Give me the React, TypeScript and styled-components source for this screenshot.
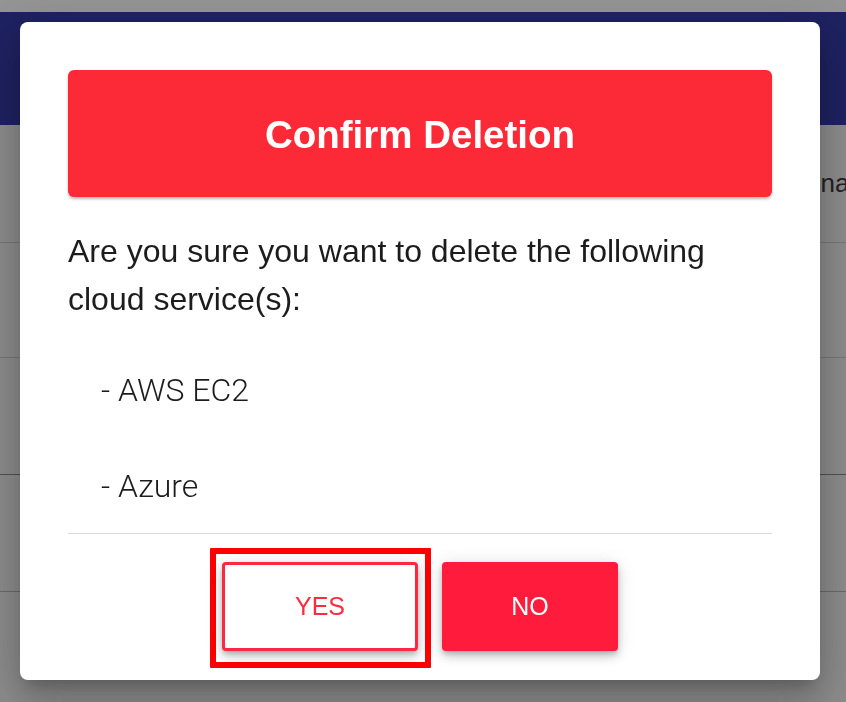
import React from "react";
import styled, { createGlobalStyle } from "styled-components";

const Global = createGlobalStyle`
  html, body { margin: 0; padding: 0; }
  body {
    width: 846px;
    height: 702px;
    overflow: hidden;
    background: #ffffff;
    font-family: "Liberation Sans", Arial, sans-serif;
  }
`;

const Page = styled.div`
  width: 846px;
  height: 702px;
  display: flex;
  flex-direction: column;
  background: #f0f0f0;
  overflow: hidden;
`;

const TopStrip = styled.div`
  height: 12px;
  background: #ffffff;
  flex: none;
`;

const AppBar = styled.div`
  height: 113px;
  background: #343aa6;
  flex: none;
`;

const Row = styled.div<{ $h: number; $line: string }>`
  height: ${(p) => p.$h}px;
  flex: none;
  display: grid;
  grid-template-columns: 715px 1fr;
  align-items: center;
  border-bottom: 1px solid ${(p) => p.$line};
`;

const HeadCell = styled.div`
  grid-column: 2;
  padding-left: 16px;
  font-size: 26px;
  color: #3a3a3a;
  white-space: nowrap;
  overflow: hidden;
`;

const Backdrop = styled.div`
  position: fixed;
  inset: 0;
  background: rgba(0, 0, 0, 0.42);
  display: flex;
  align-items: flex-start;
  justify-content: flex-start;
  padding: 22px 0 0 20px;
`;

const Dialog = styled.div`
  width: 800px;
  height: 658px;
  box-sizing: border-box;
  background: #ffffff;
  border-radius: 8px;
  padding: 48px 48px 29px;
  display: flex;
  flex-direction: column;
  box-shadow: 0px 11px 15px -7px rgba(0, 0, 0, 0.2),
    0px 24px 38px 3px rgba(0, 0, 0, 0.14), 0px 9px 46px 8px rgba(0, 0, 0, 0.12);
`;

const Header = styled.div`
  height: 127px;
  box-sizing: border-box;
  padding-top: 3px;
  flex: none;
  background: #fc2a36;
  border-radius: 6px;
  display: flex;
  align-items: center;
  justify-content: center;
  box-shadow: 0 2px 3px rgba(0, 0, 0, 0.28);
`;

const Title = styled.h2`
  margin: 0;
  color: #ffffff;
  font-size: 38.5px;
  font-weight: 700;
`;

const Message = styled.p`
  margin: 30px 0 0;
  font-size: 32px;
  line-height: 48px;
  color: #1c1c1c;
`;

const List = styled.div`
  margin-top: 43px;
  display: flex;
  flex-direction: column;
  gap: 48px;
`;

const Item = styled.div`
  padding-left: 33px;
  font-family: Roboto, "Liberation Sans", sans-serif;
  font-size: 32px;
  line-height: 48px;
  color: #1c1c1c;
  font-weight: 300;
`;

const Divider = styled.hr`
  margin: 23px 0 0;
  border: 0;
  border-top: 1px solid #dcdcdc;
  height: 0;
`;

const Actions = styled.div`
  margin-top: 28px;
  display: flex;
  justify-content: center;
  gap: 24px;
`;

const FocusRing = styled.span`
  display: flex;
  border: 6px solid #ff0000;
  border-radius: 1px;
  padding: 8px 7px 11px 6px;
  margin: -14px -13px -17px -12px;
`;

const Button = styled.button<{ $primary?: boolean; $w: number }>`
  width: ${(p) => p.$w}px;
  height: 89px;
  box-sizing: border-box;
  border-radius: 4px;
  font-family: "Liberation Sans", Arial, sans-serif;
  font-size: 25px;
  text-transform: uppercase;
  cursor: pointer;
  background: ${(p) => (p.$primary ? "#fe1b3b" : "#ffffff")};
  color: ${(p) => (p.$primary ? "#ffffff" : "#fb2b41")};
  border: ${(p) => (p.$primary ? "none" : "3px solid #fc2840")};
  box-shadow: 0px 3px 5px -1px rgba(0, 0, 0, 0.2),
    0px 6px 10px 0px rgba(0, 0, 0, 0.14), 0px 1px 18px 0px rgba(0, 0, 0, 0.12);
  outline: none;
`;

export default function App() {
  const services = ["AWS EC2", "Azure"];
  return (
    <>
      <Global />
      <Page>
        <TopStrip />
        <AppBar />
        <Row $h={117} $line="#c8ccd2">
          <HeadCell>Region name</HeadCell>
        </Row>
        <Row $h={114} $line="#c8ccd2" />
        <Row $h={116} $line="#8a8a8a" />
        <Row $h={116} $line="#b5b5b5" />
      </Page>
      <Backdrop>
        <Dialog role="dialog" aria-modal="true">
          <Header>
            <Title>Confirm Deletion</Title>
          </Header>
          <Message>
            Are you sure you want to delete the following cloud service(s):
          </Message>
          <List>
            {services.map((s) => (
              <Item key={s}>- {s}</Item>
            ))}
          </List>
          <Divider />
          <Actions>
            <FocusRing>
              <Button $w={196}>Yes</Button>
            </FocusRing>
            <Button $w={176} $primary>
              No
            </Button>
          </Actions>
        </Dialog>
      </Backdrop>
    </>
  );
}
